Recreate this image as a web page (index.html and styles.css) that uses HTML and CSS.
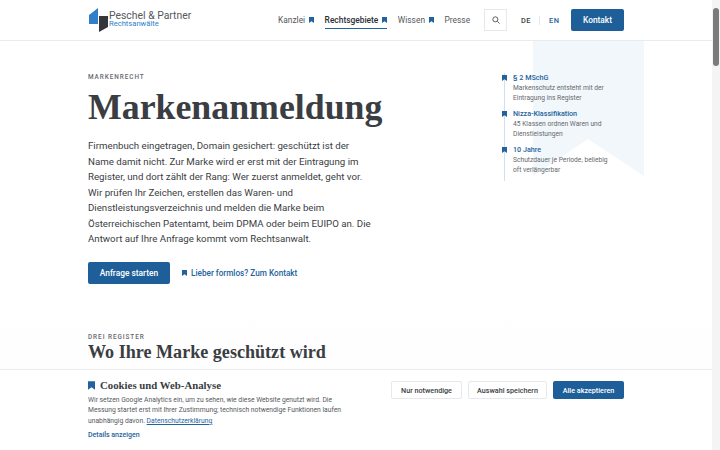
FILE: index.html
```html
<!DOCTYPE html>
<html lang="de">
<head>
  <meta charset="UTF-8" />
  <title>Markenanmeldung | Peschel &amp; Partner</title>
  <link rel="stylesheet" href="styles.css">
</head>
<body>
  <svg class="sprite" width="0" height="0">
    <symbol id="mark" viewBox="0 0 10 12"><path d="M0 0h10v12L5 8.6 0 12z"/></symbol>
  </svg>

  <div class="page">
    <header class="topbar">
      <div class="wrap topbar-in">
        <a class="logo" href="#">
          <svg width="19" height="24" viewBox="0 0 19 24">
            <path fill="#2f80c8" d="M0 7 9 0v16H0z"/>
            <path fill="#34363a" d="M10 8h9v11l-9 5z"/>
          </svg>
          <span class="logo-txt">
            <span class="logo-name">Peschel &amp; Partner</span>
            <span class="logo-sub">Rechtsanwälte</span>
          </span>
        </a>
        <nav class="nav">
          <a href="#">Kanzlei <svg class="mk"><use href="#mark"/></svg></a>
          <a href="#" class="active">Rechtsgebiete <svg class="mk"><use href="#mark"/></svg></a>
          <a href="#">Wissen <svg class="mk"><use href="#mark"/></svg></a>
          <a href="#">Presse</a>
        </nav>
        <button class="search" aria-label="Suche">
          <svg width="8" height="8" viewBox="0 0 12 12" fill="none" stroke="#555" stroke-width="1.4"><circle cx="5" cy="5" r="3.8"/><path d="M8 8l3.3 3.3"/></svg>
        </button>
        <div class="lang"><a href="#">DE</a><a href="#" class="en">EN</a></div>
        <a class="btn btn-main btn-top" href="#">Kontakt</a>
      </div>
    </header>

    <main>
      <section class="hero">
        <svg class="pennant" viewBox="0 0 111 135" preserveAspectRatio="none"><path d="M0 0h111v135L55 98 0 135z"/></svg>
        <div class="wrap hero-in">
          <div class="hero-main">
            <div class="eyebrow">MARKENRECHT</div>
            <h1>Markenanmeldung</h1>
            <p class="lead">Firmenbuch eingetragen, Domain gesichert: geschützt ist der Name damit nicht. Zur Marke wird er erst mit der Eintragung im Register, und dort zählt der Rang: Wer zuerst anmeldet, geht vor. Wir prüfen Ihr Zeichen, erstellen das Waren- und Dienstleistungsverzeichnis und melden die Marke beim Österreichischen Patentamt, beim DPMA oder beim EUIPO an. Die Antwort auf Ihre Anfrage kommt vom Rechtsanwalt.</p>
            <div class="actions">
              <a class="btn btn-main btn-start" href="#">Anfrage starten</a>
              <a class="more" href="#"><svg class="mk"><use href="#mark"/></svg> Lieber formlos? Zum Kontakt</a>
            </div>
          </div>
          <aside class="facts">
            <div class="fact">
              <svg class="mk fact-mk"><use href="#mark"/></svg>
              <h4>§ 2 MSchG</h4>
              <p>Markenschutz entsteht mit der Eintragung ins Register</p>
            </div>
            <div class="fact">
              <svg class="mk fact-mk"><use href="#mark"/></svg>
              <h4>Nizza-Klassifikation</h4>
              <p>45 Klassen ordnen Waren und Dienstleistungen</p>
            </div>
            <div class="fact">
              <svg class="mk fact-mk"><use href="#mark"/></svg>
              <h4>10 Jahre</h4>
              <p>Schutzdauer je Periode, beliebig oft verlängerbar</p>
            </div>
          </aside>
        </div>
      </section>

      <section class="registers">
        <div class="wrap">
          <div class="eyebrow eyebrow-2">DREI REGISTER</div>
          <h2>Wo Ihre Marke geschützt wird</h2>
        </div>
      </section>
    </main>

    <div class="cookie">
      <div class="wrap cookie-in">
        <div class="cookie-txt">
          <h3><svg class="cookie-mk"><use href="#mark"/></svg> Cookies und Web-Analyse</h3>
          <p>Wir setzen Google Analytics ein, um zu sehen, wie diese Website genutzt wird. Die Messung startet erst mit Ihrer Zustimmung; technisch notwendige Funktionen laufen unabhängig davon. <a href="#">Datenschutzerklärung</a></p>
          <a class="details" href="#">Details anzeigen</a>
        </div>
        <div class="cookie-btns">
          <button class="btn btn-line">Nur notwendige</button>
          <button class="btn btn-line">Auswahl speichern</button>
          <button class="btn btn-main">Alle akzeptieren</button>
        </div>
      </div>
    </div>
  </div>

  <div class="scrollbar"><span class="thumb"></span></div>
</body>
</html>
```

FILE: styles.css
```css
*{box-sizing:border-box;}
html,body{height:100%;}
body{margin:0;display:flex;height:450px;overflow:hidden;background:#fff;color:#3a3d42;font-family:Roboto,Arial,sans-serif;}
a{color:inherit;text-decoration:none;}
.sprite{position:absolute;}
.page{flex:1;position:relative;overflow:hidden;min-width:0;}
.wrap{width:536px;margin:0 0 0 88px;}

/* top */
.topbar{height:41px;border-bottom:1px solid #e9ebee;background:#fff;}
.topbar-in{display:flex;align-items:center;height:40px;}
.logo{display:flex;align-items:center;gap:1px;width:190px;padding-left:1px;}
.logo-txt{display:flex;flex-direction:column;margin-top:-2px;}
.logo-name{font-size:10.4px;line-height:9px;color:#55585d;}
.logo-sub{font-size:7.6px;line-height:8px;color:#2f80c8;}
.nav{display:flex;gap:10.5px;font-size:8.4px;color:#55585d;align-items:center;width:206px;}
.nav a{display:flex;align-items:center;gap:4px;height:17px;}
.nav .active{color:#2b2e33;font-weight:500;border-bottom:1.5px solid #23639d;}
.mk{width:5px;height:6px;fill:#23639d;}
.search{width:23px;height:22px;border:1px solid #e6e8eb;background:#fff;padding:0;display:flex;align-items:center;justify-content:center;}
.lang{display:flex;margin-left:14px;font-size:7.4px;font-weight:500;letter-spacing:.5px;width:50px;}
.lang a{padding-right:8px;margin-right:9px;border-right:1px solid #e6e8eb;color:#3a3d42;}
.lang .en{border:0;padding:0;margin:0;color:#23639d;}
.btn{display:inline-flex;align-items:center;justify-content:center;border-radius:2px;font-family:inherit;font-weight:500;}
.btn-main{background:#1f5f99;color:#fff;border:0;}
.btn-top{width:53px;height:22px;font-size:8.4px;}

/* hero */
.hero{position:relative;height:269px;}
.pennant{position:absolute;left:533px;top:0;width:111px;height:135px;fill:#f2f7fb;}
.hero-in{position:relative;display:flex;}
.hero-main{width:416px;padding-top:32px;}
.eyebrow{font-size:6.4px;font-weight:500;letter-spacing:.95px;color:#66696e;line-height:9px;}
h1{margin:4px 0 0;font-family:"Liberation Serif",serif;font-size:35.8px;line-height:42px;font-weight:700;color:#3a3d42;}
.lead{margin:10px 0 0;width:286px;font-size:9.7px;line-height:15.5px;color:#3a3d42;}
.actions{display:flex;align-items:center;margin-top:15px;gap:12px;}
.btn-start{width:82px;height:22px;font-size:8.4px;}
.more{font-size:8.2px;font-weight:500;color:#23639d;display:flex;align-items:center;gap:4px;}

.facts{padding-top:32px;width:120px;}
.fact{position:relative;padding-left:8px;padding-bottom:6px;border-left:1px solid #d3dfea;}
.fact-mk{position:absolute;left:-3px;top:2px;}
.fact h4{margin:0;font-size:7.2px;line-height:10px;font-weight:500;color:#23639d;}
.fact p{margin:0;max-width:100px;font-size:6.7px;line-height:10px;color:#66696e;}

/* registers */
.registers{height:140px;background:linear-gradient(#fff,#fbfbfb);padding-top:23px;}
h2{margin:0;font-family:"Liberation Serif",serif;font-size:18.1px;line-height:20px;font-weight:700;color:#3a3d42;}

/* cookie banner */
.cookie{position:absolute;left:0;right:0;bottom:0;height:81px;background:#fff;border-top:1px solid #e9ebee;}
.cookie-in{display:flex;justify-content:space-between;padding-top:9px;}
.cookie-txt{width:256px;}
.cookie h3{margin:0;font-family:"Liberation Serif",serif;font-size:10.8px;line-height:12px;font-weight:700;color:#3a3d42;display:flex;align-items:center;gap:5px;}
.cookie-mk{width:7px;height:9px;fill:#23639d;}
.cookie p{margin:4px 0 0;font-size:6.75px;line-height:10.4px;color:#55585d;}
.cookie p a{color:#23639d;text-decoration:underline;}
.details{display:block;margin-top:5px;font-size:7px;font-weight:500;color:#23639d;}
.cookie-btns{display:flex;gap:6px;align-items:flex-start;padding-top:2px;}
.cookie-btns .btn{height:18px;font-size:7.2px;padding:0;}
.btn-line{background:#fff;border:1px solid #e6e8eb;color:#3a3d42;width:71px;}
.btn-line + .btn-line{width:79px;}
.cookie-btns .btn-main{width:71px;}

/* scroll bar */
.scrollbar{width:8px;background:#f4f4f4;position:relative;}
.thumb{position:absolute;left:1px;right:1px;top:8px;height:58px;background:#7b7b7b;border-radius:3px;}
```
